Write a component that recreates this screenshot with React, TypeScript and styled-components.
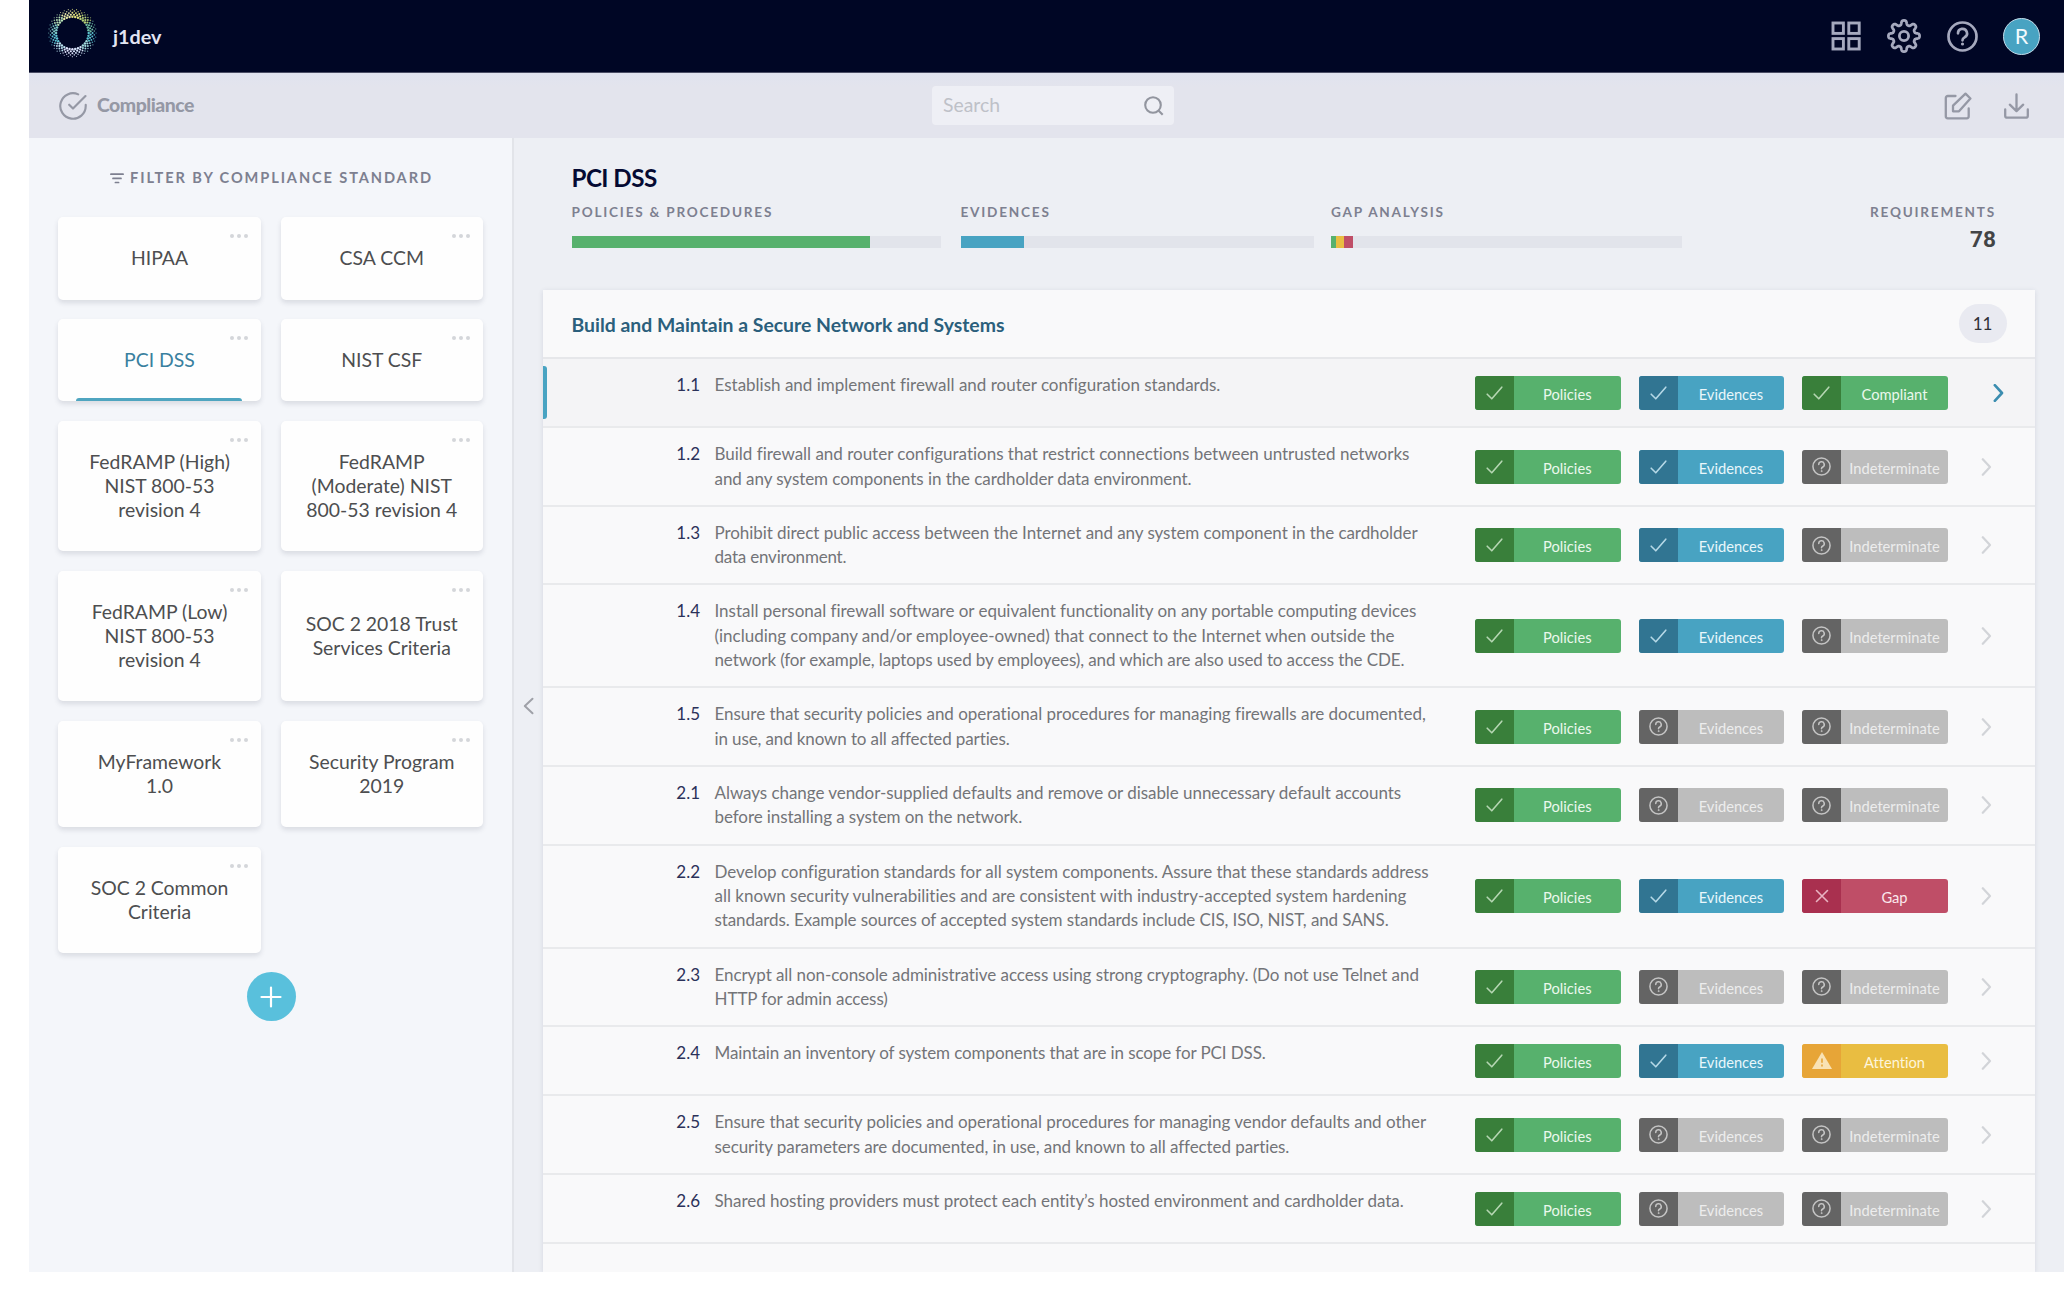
import React from "react";
import styled, { createGlobalStyle, css } from "styled-components";

const GlobalStyle = createGlobalStyle`
  *, *::before, *::after { box-sizing: border-box; }
  html, body { margin: 0; padding: 0; background: #fff; }
  body {
    font-family: Lato, "Liberation Sans", sans-serif;
    font-size: 19.4px;
    line-height: 24.3px;
    font-variant-ligatures: none;
    overflow: hidden;
  }
  svg { display: block; flex: none; }
`;

const Page = styled.div`
  width: 2064px;
  height: 1306px;
  padding: 0 0 34px 29px;
  background: #fff;
`;

const Shell = styled.div`
  height: 1272px;
  display: flex;
  flex-direction: column;
  overflow: hidden;
  background: #edeff4;
`;

const TopBar = styled.header`
  flex: none;
  height: 73px;
  display: flex;
  align-items: center;
  justify-content: space-between;
  padding: 0 24px 0 18px;
  background: #000625;
  border-bottom: 1px solid #4b4e66;
`;

const Brand = styled.div`
  display: flex;
  align-items: center;
  gap: 16px;
  color: #e3e5f3;
  font-weight: 700;
  font-size: 19.8px;
`;

const BrandLogo = styled.div`
  padding-bottom: 7px;
`;

const TopActions = styled.nav`
  display: flex;
  align-items: center;
  color: #a5a9be;
`;

const TopAction = styled.span<{ $after: number }>`
  display: flex;
  margin-right: ${(p) => p.$after}px;
`;

const Avatar = styled.div`
  width: 37px;
  height: 37px;
  border-radius: 50%;
  border: 1.5px solid #c3dcea;
  background: #48a3c2;
  color: #f2fafd;
  font-size: 21.5px;
  display: flex;
  align-items: center;
  justify-content: center;
`;

const SubBar = styled.div`
  flex: none;
  height: 65px;
  display: grid;
  grid-template-columns: 873px 242px 1fr;
  align-items: center;
  padding: 0 35px 0 30px;
  background: linear-gradient(#e0e3ef, #e3e4ed 14px);
  color: #9598a5;
`;

const PageName = styled.div`
  display: flex;
  align-items: center;
  gap: 10px;
  font-size: 19.4px;
  font-weight: 900;
  letter-spacing: -0.48px;
`;

const SearchBox = styled.div`
  height: 39px;
  display: flex;
  align-items: center;
  justify-content: space-between;
  padding: 0 10px 0 11px;
  border-radius: 4px;
  background: #eeeff5;
  color: #bec1c8;
  font-size: 19.4px;
  svg { color: #92959f; }
`;

const PageActions = styled.div`
  display: flex;
  justify-content: flex-end;
  align-items: center;
  gap: 32px;
`;

const Body = styled.div`
  flex: 1;
  min-height: 0;
  display: flex;
`;

const Sidebar = styled.aside`
  flex: none;
  width: 485px;
  padding: 28px 29px 0 29px;
  background: #f4f6fa;
  border-right: 2px solid #e2e4e9;
  display: flex;
  flex-direction: column;
  align-items: center;
`;

const FilterTitle = styled.div`
  display: flex;
  align-items: center;
  gap: 6px;
  margin-left: 2px;
  color: #7d8090;
  font-size: 14.6px;
  font-weight: 700;
  letter-spacing: 1.89px;
  white-space: nowrap;
`;

const CardGrid = styled.div`
  margin-top: 27px;
  display: grid;
  grid-template-columns: 203px 202.5px;
  gap: 19.5px;
`;

const StandardCard = styled.div<{ $active?: boolean }>`
  position: relative;
  display: flex;
  align-items: center;
  justify-content: center;
  padding: 29px 10px;
  border-radius: 5px;
  background: #fefefe;
  box-shadow: 0 3px 5px rgba(40, 50, 70, 0.13);
  color: ${(p) => (p.$active ? "#39809f" : "#4d4e50")};
  font-size: 19.4px;
  line-height: 24.2px;
  text-align: center;
  white-space: pre;
  ${(p) =>
    p.$active &&
    css`
      &::after {
        content: "";
        position: absolute;
        left: 18px;
        right: 19px;
        bottom: 0;
        height: 3px;
        border-radius: 3px 3px 0 0;
        background: #4fa5c0;
      }
    `}
`;

const MoreDots = styled.span`
  position: absolute;
  top: 17px;
  right: 13px;
  display: flex;
  gap: 3px;
  i {
    width: 4px;
    height: 4px;
    border-radius: 50%;
    background: #d4d6da;
  }
`;

const AddButton = styled.div`
  width: 49px;
  height: 49px;
  margin: 19px 0 0 1px;
  border-radius: 50%;
  background: #59c0dc;
  color: #fff;
  display: flex;
  align-items: center;
  justify-content: center;
`;

const Collapse = styled.div`
  flex: none;
  width: 28.5px;
  display: flex;
  align-items: center;
  justify-content: center;
  padding: 2px 0.5px 0 0;
  color: #9fa1a8;
`;

const Main = styled.main`
  flex: 1;
  min-width: 0;
  display: flex;
  flex-direction: column;
  padding: 25px 29px 0 0;
`;

const Summary = styled.section`
  height: 127px;
  flex: none;
  padding: 0 39px 0 29px;
`;

const Heading = styled.h1`
  margin: 0;
  font-size: 24.2px;
  line-height: 30px;
  font-weight: 700;
  color: #050a33;
  letter-spacing: -0.55px;
`;

const Stats = styled.div`
  display: flex;
  margin-top: 9px;
`;

const Stat = styled.div<{ $width: number; $after: number }>`
  width: ${(p) => p.$width}px;
  margin-right: ${(p) => p.$after}px;
`;

const StatLabel = styled.div`
  color: #7d8090;
  font-size: 13.6px;
  line-height: 20px;
  font-weight: 700;
  letter-spacing: 1.77px;
  white-space: nowrap;
`;

const Track = styled.div`
  height: 12px;
  margin-top: 14px;
  display: flex;
  background: #e2e4eb;
`;

const Fill = styled.div<{ $color: string }>`
  background: ${(p) => p.$color};
`;

const Total = styled.div`
  margin-left: auto;
  text-align: right;
`;

const TotalValue = styled.div`
  margin-top: 3px;
  font-size: 22.6px;
  line-height: 30px;
  font-weight: 700;
  font-family: Roboto, Lato, sans-serif;
  color: #434446;
`;

const Panel = styled.section`
  flex: 1;
  min-height: 0;
  background: #f9f9fa;
  box-shadow: 0 1px 5px rgba(40, 50, 80, 0.12);
`;

const PanelHeader = styled.div`
  height: 69px;
  display: flex;
  align-items: center;
  justify-content: space-between;
  padding: 0 28.5px 0 29px;
  border-bottom: 2px solid #e6e7ea;
  color: #2b5f7c;
  font-size: 19.4px;
  font-weight: 700;
`;

const PanelTitle = styled.span`
  padding-top: 3px;
`;

const Count = styled.span`
  width: 48px;
  height: 39px;
  border-radius: 20px;
  background: #e9eaf1;
  color: #303136;
  font-size: 17px;
  font-weight: 400;
  padding-top: 1px;
  display: flex;
  align-items: center;
  justify-content: center;
`;

const Row = styled.div<{ $active?: boolean }>`
  position: relative;
  min-height: 69.2px;
  display: flex;
  align-items: center;
  padding: 14px ${(p) => (p.$active ? 31 : 43)}px 14px 0;
  background: ${(p) => (p.$active ? "#f4f4f6" : "#f9f9fa")};
  border-bottom: 2px solid #e9eaec;
  line-height: 24.32px;
  ${(p) =>
    p.$active &&
    css`
      &::before {
        content: "";
        position: absolute;
        left: 0;
        top: 7px;
        bottom: 7px;
        width: 4px;
        border-radius: 0 3px 3px 0;
        background: #48a3c2;
      }
    `}
`;

const Code = styled.div`
  align-self: flex-start;
  width: 157.5px;
  text-align: right;
  color: #2b3159;
  font-size: 17px;
`;

const Description = styled.div`
  align-self: flex-start;
  width: 760.5px;
  margin-left: 14.5px;
  color: #737478;
  font-size: 17px;
`;

const Line = styled.div<{ $tracking: number }>`
  white-space: nowrap;
  letter-spacing: ${(p) => p.$tracking.toFixed(3)}px;
`;

const Badges = styled.div`
  display: flex;
  gap: 18px;
`;

type Tone = "green" | "blue" | "gray" | "red" | "amber";

const tones: Record<Tone, { dark: string; base: string; icon: string; text: string }> = {
  green: { dark: "#397f3a", base: "#57b16d", icon: "#b5d6b2", text: "#eaf8ec" },
  blue: { dark: "#317592", base: "#48a3c2", icon: "#b5d8e6", text: "#e9f7fb" },
  gray: { dark: "#646464", base: "#bdbdbd", icon: "#c4c4c4", text: "#ededed" },
  red: { dark: "#a9304f", base: "#bf4e67", icon: "#e8b3c1", text: "#fbe8ed" },
  amber: { dark: "#e7a537", base: "#e9bd41", icon: "#f9e2b4", text: "#fdf5dc" },
};

const BadgeBox = styled.div<{ $tone: Tone }>`
  width: 145.6px;
  height: 34px;
  display: flex;
  border-radius: 3px;
  overflow: hidden;
  background: ${(p) => tones[p.$tone].base};
  color: ${(p) => tones[p.$tone].text};
`;

const BadgeIcon = styled.span<{ $tone: Tone }>`
  width: 39px;
  display: flex;
  align-items: center;
  justify-content: center;
  background: ${(p) => tones[p.$tone].dark};
  color: ${(p) => tones[p.$tone].icon};
`;

const BadgeText = styled.span`
  flex: 1;
  padding-top: 1px;
  font-size: 14.7px;
  line-height: 34px;
  text-align: center;
`;

const RowArrow = styled.span<{ $active?: boolean }>`
  margin-left: auto;
  color: ${(p) => (p.$active ? "#3b8db0" : "#d2d4d8")};
`;

/* ---------- drawings ---------- */

const Svg = ({ w, h, box, stroke = 2, children }: { w: number; h: number; box?: string; stroke?: number; children: React.ReactNode }) => (
  <svg width={w} height={h} viewBox={box ?? `0 0 ${w} ${h}`} fill="none" stroke="currentColor" strokeWidth={stroke} strokeLinecap="round" strokeLinejoin="round">
    {children}
  </svg>
);

const ringStops = ["#dfe07c", "#b4d077", "#6fc0a5", "#5cc4d0", "#a2dcde", "#d5e3fa", "#dde1fb", "#b8e0ee", "#5cc4d4", "#7cc8c4", "#b6e0b6", "#eaeba8"];

const Logo = () => {
  const dots: React.ReactNode[] = [];
  const rings = [
    { r: 16.3, s: 1.2 },
    { r: 18.3, s: 1.1 },
    { r: 20.2, s: 0.95 },
    { r: 22, s: 0.8 },
    { r: 23.7, s: 0.6 },
  ];
  const n = 36;
  rings.forEach(({ r, s }, k) => {
    for (let i = 0; i < n; i++) {
      const t = (i + (k % 2) / 2) / n;
      const a = t * Math.PI * 2 - Math.PI / 2;
      const stop = Math.floor(t * ringStops.length) % ringStops.length;
      dots.push(<circle key={`${k}-${i}`} cx={25.4 + r * Math.cos(a)} cy={25 + r * Math.sin(a)} r={s} fill={ringStops[stop]} opacity={k > 2 ? 0.8 : 1} />);
    }
  });
  return <svg width="50" height="50" viewBox="0 0 50 50">{dots}</svg>;
};

const GridIcon = () => (
  <svg width="30" height="30" viewBox="0 0 30 30" fill="none" stroke="currentColor" strokeWidth="2.9">
    <rect x="2" y="2" width="10.4" height="10.4" />
    <rect x="17.8" y="2" width="10.4" height="10.4" />
    <rect x="2" y="17.6" width="10.4" height="10.4" />
    <rect x="17.8" y="17.6" width="10.4" height="10.4" />
  </svg>
);

const gearPath = (() => {
  const pts: string[] = [];
  for (let i = 0; i < 240; i++) {
    const a = (i / 240) * Math.PI * 2;
    const wave = Math.tanh(2 * Math.cos(8 * a)) / Math.tanh(2);
    const r = 13.4 + 1.9 * wave + 0.25 * Math.cos(8 * a);
    pts.push(`${(17 + r * Math.sin(a)).toFixed(2)} ${(17 - r * Math.cos(a)).toFixed(2)}`);
  }
  return `M${pts.join("L")}Z`;
})();

const GearIcon = () => (
  <Svg w={34} h={34} stroke={2.8}>
    <path d={gearPath} />
    <circle cx="17" cy="17" r="4.6" />
  </Svg>
);

const HelpIcon = ({ size, stroke }: { size: number; stroke: number }) => (
  <Svg w={size} h={size} box="0 0 31 31" stroke={stroke}>
    <circle cx="15.5" cy="15.5" r="14" />
    <path d="M11 12.3a4.5 4.5 0 1 1 6.6 4c-1.4.8-2.1 1.5-2.1 3" />
    <circle cx="15.5" cy="23" r="0.8" fill="currentColor" strokeWidth={stroke * 0.55} />
  </Svg>
);

const CheckCircleIcon = () => (
  <Svg w={28} h={28} box="1 1 22 22" stroke={1.7}>
    <path d="M22 11.08V12a10 10 0 1 1-5.93-9.14" />
    <path d="M21.8 4.2 12 14.01l-3-3" />
  </Svg>
);

const SearchIcon = () => (
  <Svg w={20} h={20} stroke={2.1}>
    <circle cx="9" cy="9" r="7.8" />
    <path d="m14.7 14.7 4 4" strokeLinecap="butt" />
  </Svg>
);

const EditIcon = () => (
  <Svg w={28} h={28} stroke={2.3}>
    <path d="M11.5 4H3.8A2 2 0 0 0 1.8 6v18.3a2 2 0 0 0 2 2H22.7a2 2 0 0 0 2-2V16.5" />
    <path d="M21.5 1.6l4.9 4.9L15 19.3H9v-5.6z" />
  </Svg>
);

const DownloadIcon = () => (
  <Svg w={25} h={26} stroke={2.3}>
    <path d="M12.5 1.5v16.3M5.8 11.7l6.7 6.4 6.7-6.4" />
    <path d="M1.2 16.5v6.2a2 2 0 0 0 2 2h18.6a2 2 0 0 0 2-2v-6.2" />
  </Svg>
);

const FilterIcon = () => (
  <Svg w={14} h={11} stroke={1.7}>
    <path d="M.9 1.2h12.2M3 5.4h8M5.4 9.5h3.2" />
  </Svg>
);

const BadgeGlyph = ({ tone }: { tone: Tone }) => {
  if (tone === "gray") return <HelpIcon size={19} stroke={2.5} />;
  if (tone === "red")
    return (
      <Svg w={14} h={14} stroke={1.6}>
        <path d="M1.5 1.5l11 11M12.5 1.5l-11 11" />
      </Svg>
    );
  if (tone === "amber")
    return (
      <svg width="20" height="17" viewBox="0 0 20 17">
        <path d="M10 0 20 17H0z" fill="currentColor" />
        <path d="M10 6.5v4.3M10 12.5v2" stroke="#e7a537" strokeWidth="1.6" />
      </svg>
    );
  return (
    <Svg w={17} h={14} stroke={1.6}>
      <path d="M1.2 8.2l4.6 4.6L15.8 1.2" />
    </Svg>
  );
};

const Badge = ({ tone, label }: { tone: Tone; label: string }) => (
  <BadgeBox $tone={tone}>
    <BadgeIcon $tone={tone}>
      <BadgeGlyph tone={tone} />
    </BadgeIcon>
    <BadgeText>{label}</BadgeText>
  </BadgeBox>
);

/* ---------- data ---------- */

const standards = [
  "HIPAA",
  "CSA CCM",
  "PCI DSS",
  "NIST CSF",
  "FedRAMP (High)\nNIST 800-53\nrevision 4",
  "FedRAMP\n(Moderate) NIST\n800-53 revision 4",
  "FedRAMP (Low)\nNIST 800-53\nrevision 4",
  "SOC 2 2018 Trust\nServices Criteria",
  "MyFramework\n1.0",
  "Security Program\n2019",
  "SOC 2 Common\nCriteria",
];

const stats = [
  { label: "POLICIES & PROCEDURES", width: 369, after: 20, fills: [{ w: 298, c: "#57b16d" }] },
  { label: "EVIDENCES", width: 353, after: 17.5, fills: [{ w: 63.5, c: "#48a3c2" }] },
  {
    label: "GAP ANALYSIS",
    width: 351,
    after: 0,
    fills: [
      { w: 5, c: "#57b16d" },
      { w: 8, c: "#e9bd41" },
      { w: 9, c: "#bf4e67" },
    ],
  },
];

const results: Record<string, Tone> = { Compliant: "green", Indeterminate: "gray", Gap: "red", Attention: "amber" };

/* Each line is paired with the pixels its natural width is tightened by. */
type TextLine = [text: string, tighten: number];

const requirements: { id: string; lines: TextLine[]; evidence: boolean; result: string }[] = [
  { id: "1.1", evidence: true, result: "Compliant", lines: [["Establish and implement firewall and router configuration standards.", 0]] },
  {
    id: "1.2", evidence: true, result: "Indeterminate",
    lines: [
      ["Build firewall and router configurations that restrict connections between untrusted networks", 1],
      ["and any system components in the cardholder data environment.", 4],
    ],
  },
  {
    id: "1.3", evidence: true, result: "Indeterminate",
    lines: [
      ["Prohibit direct public access between the Internet and any system component in the cardholder", 5.5],
      ["data environment.", 3.5],
    ],
  },
  {
    id: "1.4", evidence: true, result: "Indeterminate",
    lines: [
      ["Install personal firewall software or equivalent functionality on any portable computing devices", 2],
      ["(including company and/or employee-owned) that connect to the Internet when outside the", 1],
      ["network (for example, laptops used by employees), and which are also used to access the CDE.", 10.5],
    ],
  },
  {
    id: "1.5", evidence: false, result: "Indeterminate",
    lines: [
      ["Ensure that security policies and operational procedures for managing firewalls are documented,", 2],
      ["in use, and known to all affected parties.", 5],
    ],
  },
  {
    id: "2.1", evidence: false, result: "Indeterminate",
    lines: [
      ["Always change vendor-supplied defaults and remove or disable unnecessary default accounts", 4.5],
      ["before installing a system on the network.", 3.5],
    ],
  },
  {
    id: "2.2", evidence: true, result: "Gap",
    lines: [
      ["Develop configuration standards for all system components. Assure that these standards address", 3],
      ["all known security vulnerabilities and are consistent with industry-accepted system hardening", 1],
      ["standards. Example sources of accepted system standards include CIS, ISO, NIST, and SANS.", 8.5],
    ],
  },
  {
    id: "2.3", evidence: false, result: "Indeterminate",
    lines: [
      ["Encrypt all non-console administrative access using strong cryptography. (Do not use Telnet and", 6.5],
      ["HTTP for admin access)", 1.5],
    ],
  },
  { id: "2.4", evidence: true, result: "Attention", lines: [["Maintain an inventory of system components that are in scope for PCI DSS.", 7.5]] },
  {
    id: "2.5", evidence: false, result: "Indeterminate",
    lines: [
      ["Ensure that security policies and operational procedures for managing vendor defaults and other", 2.5],
      ["security parameters are documented, in use, and known to all affected parties.", 6],
    ],
  },
  { id: "2.6", evidence: false, result: "Indeterminate", lines: [["Shared hosting providers must protect each entity’s hosted environment and cardholder data.", 3.5]] },
];

export default function App() {
  return (
    <Page>
      <GlobalStyle />
      <Shell>
        <TopBar>
          <Brand>
            <BrandLogo>
              <Logo />
            </BrandLogo>
            j1dev
          </Brand>
          <TopActions>
            <TopAction $after={26}><GridIcon /></TopAction>
            <TopAction $after={26}><GearIcon /></TopAction>
            <TopAction $after={25}><HelpIcon size={31} stroke={2.7} /></TopAction>
            <Avatar>R</Avatar>
          </TopActions>
        </TopBar>
        <SubBar>
          <PageName>
            <CheckCircleIcon />
            Compliance
          </PageName>
          <SearchBox>
            Search
            <SearchIcon />
          </SearchBox>
          <PageActions>
            <EditIcon />
            <DownloadIcon />
          </PageActions>
        </SubBar>
        <Body>
          <Sidebar>
            <FilterTitle>
              <FilterIcon />
              FILTER BY COMPLIANCE STANDARD
            </FilterTitle>
            <CardGrid>
              {standards.map((name) => (
                <StandardCard key={name} $active={name === "PCI DSS"}>
                  {name}
                  <MoreDots><i /><i /><i /></MoreDots>
                </StandardCard>
              ))}
            </CardGrid>
            <AddButton>
              <Svg w={22} h={22} stroke={2.2}>
                <path d="M11 1.5v19M1.5 11h19" />
              </Svg>
            </AddButton>
          </Sidebar>
          <Collapse>
            <Svg w={11} h={18} stroke={2}>
              <path d="M9.5 1.8 1.8 9l7.7 7.2" />
            </Svg>
          </Collapse>
          <Main>
            <Summary>
              <Heading>PCI DSS</Heading>
              <Stats>
                {stats.map((s) => (
                  <Stat key={s.label} $width={s.width} $after={s.after}>
                    <StatLabel>{s.label}</StatLabel>
                    <Track>
                      {s.fills.map((f) => (
                        <Fill key={f.c} $color={f.c} style={{ width: f.w }} />
                      ))}
                    </Track>
                  </Stat>
                ))}
                <Total>
                  <StatLabel>REQUIREMENTS</StatLabel>
                  <TotalValue>78</TotalValue>
                </Total>
              </Stats>
            </Summary>
            <Panel>
              <PanelHeader>
                <PanelTitle>Build and Maintain a Secure Network and Systems</PanelTitle>
                <Count>11</Count>
              </PanelHeader>
              {requirements.map((r, i) => (
                <Row key={r.id} $active={i === 0}>
                  <Code>{r.id}</Code>
                  <Description>
                    {r.lines.map(([text, tighten]) => (
                      <Line key={text} $tracking={-tighten / text.length}>{text}</Line>
                    ))}
                  </Description>
                  <Badges>
                    <Badge tone="green" label="Policies" />
                    <Badge tone={r.evidence ? "blue" : "gray"} label="Evidences" />
                    <Badge tone={results[r.result]} label={r.result} />
                  </Badges>
                  <RowArrow $active={i === 0}>
                    <Svg w={11} h={18} stroke={i === 0 ? 2.6 : 2.2}>
                      <path d="M1.8 1.2 9 9l-7.2 7.8" />
                    </Svg>
                  </RowArrow>
                </Row>
              ))}
            </Panel>
          </Main>
        </Body>
      </Shell>
    </Page>
  );
}
